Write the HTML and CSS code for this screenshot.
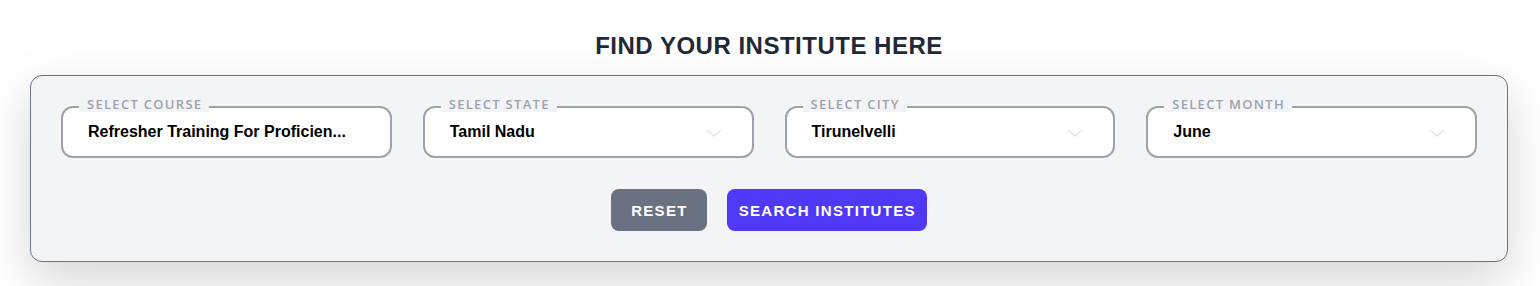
FILE: index.html
```html
<!DOCTYPE html>
<html lang="en">
<head>
    <meta charset="UTF-8">
    <meta name="viewport" content="width=device-width, initial-scale=1.0">
    <title>Find Your Institute</title>
    <link rel="stylesheet" href="styles.css">
</head>
<body>
    <div class="finder">
        <h2 class="finder-title">FIND YOUR INSTITUTE HERE</h2>

        <div class="finder-card">
            <div class="field-row">
                <div class="field">
                    <span class="field-label">SELECT COURSE</span>
                    <div class="field-value" title="Refresher Training For Proficiency in Survival Craft and Rescue Boats">Refresher Training For Proficien...</div>
                </div>

                <div class="field">
                    <span class="field-label">SELECT STATE</span>
                    <div class="field-value">Tamil Nadu</div>
                    <svg class="chevron" viewBox="0 0 16 8" width="16" height="8"><path d="M1 1l7 6 7-6" fill="none" stroke="#e5e7eb" stroke-width="1.5"/></svg>
                </div>

                <div class="field">
                    <span class="field-label">SELECT CITY</span>
                    <div class="field-value">Tirunelvelli</div>
                    <svg class="chevron" viewBox="0 0 16 8" width="16" height="8"><path d="M1 1l7 6 7-6" fill="none" stroke="#e5e7eb" stroke-width="1.5"/></svg>
                </div>

                <div class="field">
                    <span class="field-label">SELECT MONTH</span>
                    <div class="field-value">June</div>
                    <svg class="chevron" viewBox="0 0 16 8" width="16" height="8"><path d="M1 1l7 6 7-6" fill="none" stroke="#e5e7eb" stroke-width="1.5"/></svg>
                </div>
            </div>

            <div class="button-row">
                <button class="btn btn-reset" type="button">RESET</button>
                <button class="btn btn-search" type="button">SEARCH INSTITUTES</button>
            </div>
        </div>
    </div>
</body>
</html>
```

FILE: styles.css
```css
* {
    margin: 0;
    padding: 0;
    box-sizing: border-box;
}

body {
    font-family: 'Liberation Sans', Arial, sans-serif;
    background-color: #ffffff;
}

.finder {
    padding: 30px 32px 30px 30px;
}

.finder-title {
    text-align: center;
    font-size: 24px;
    line-height: 32px;
    font-weight: bold;
    letter-spacing: 0.5px;
    color: #1f2937;
    margin-bottom: 13px;
}

.finder-card {
    background-color: #f3f4f6;
    border: 1px solid #6b7280;
    border-radius: 12px;
    padding: 30px;
    box-shadow: 0 18px 50px rgba(0, 0, 0, 0.17);
}

.field-row {
    display: grid;
    grid-template-columns: repeat(4, minmax(0, 1fr));
    gap: 31px;
}

.field {
    position: relative;
    min-width: 0;
    height: 52px;
    background: #ffffff;
    border: 2px solid #9ca3af;
    border-radius: 12px;
    display: flex;
    align-items: center;
    padding: 0 40px 0 25px;
}

.field-label {
    position: absolute;
    top: -12px;
    left: 16px;
    padding: 0 7px 0 8px;
    background-color: #f3f4f6;
    font-family: 'Open Sans', sans-serif;
    font-size: 13px;
    line-height: 16px;
    font-weight: 600;
    letter-spacing: 1.3px;
    color: #9ca3af;
}

.field-value {
    font-size: 16px;
    font-weight: bold;
    color: #000000;
    white-space: nowrap;
}

.chevron {
    position: absolute;
    right: 30px;
    top: 21px;
}

.button-row {
    display: flex;
    justify-content: center;
    gap: 20px;
    margin-top: 31px;
}

.btn {
    height: 42px;
    border: none;
    border-radius: 8px;
    font-family: 'Liberation Sans', Arial, sans-serif;
    font-size: 15px;
    font-weight: bold;
    letter-spacing: 1.3px;
    color: #ffffff;
    cursor: pointer;
}

.btn-reset {
    background-color: #6a7282;
    padding: 0 19px 0 20px;
}

.btn-search {
    background-color: #4f39f6;
    padding: 0 11px 0 12px;
}
```
